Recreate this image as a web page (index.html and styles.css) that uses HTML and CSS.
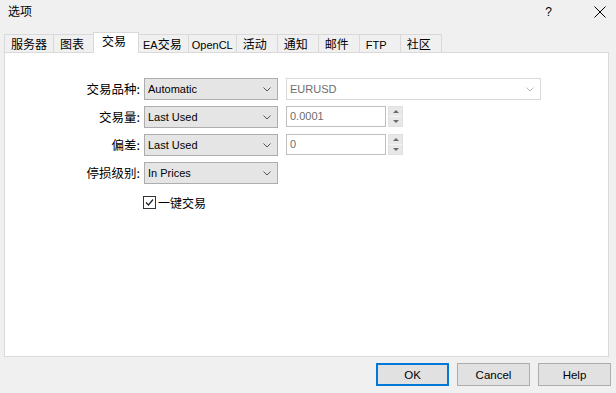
FILE: index.html
```html
<!DOCTYPE html>
<html lang="zh-CN">
<head>
    <meta charset="UTF-8">
    <title>选项</title>
    <link rel="stylesheet" href="styles.css">
</head>
<body>
    <div class="dialog">
        <div class="titlebar">
            <span class="title">选项</span>
            <span class="help">?</span>
            <svg class="close-icon" width="12" height="12" viewBox="0 0 12 12">
                <path d="M0.5 0.5 L11.5 11.5 M11.5 0.5 L0.5 11.5" stroke="#000" stroke-width="1" fill="none"/>
            </svg>
        </div>

        <div class="tabs">
            <div class="tab">服务器</div>
            <div class="tab">图表</div>
            <div class="tab active">交易</div>
            <div class="tab"><span class="lat">EA</span>交易</div>
            <div class="tab tight"><span class="lat">OpenCL</span></div>
            <div class="tab">活动</div>
            <div class="tab">通知</div>
            <div class="tab">邮件</div>
            <div class="tab"><span class="lat">FTP</span></div>
            <div class="tab">社区</div>
        </div>

        <div class="panel">
            <div class="form">
                <label class="lbl">交易品种:</label>
                <div class="combo">
                    <span>Automatic</span>
                    <svg class="chev" width="8" height="5" viewBox="0 0 8 5"><path d="M0.5 0.5 L4 4 L7.5 0.5" stroke="#555" fill="none"/></svg>
                </div>
                <div class="combo disabled">
                    <span>EURUSD</span>
                    <svg class="chev" width="8" height="5" viewBox="0 0 8 5"><path d="M0.5 0.5 L4 4 L7.5 0.5" stroke="#bcbcbc" fill="none"/></svg>
                </div>

                <label class="lbl">交易量:</label>
                <div class="combo">
                    <span>Last Used</span>
                    <svg class="chev" width="8" height="5" viewBox="0 0 8 5"><path d="M0.5 0.5 L4 4 L7.5 0.5" stroke="#555" fill="none"/></svg>
                </div>
                <div class="spin">
                    <div class="spin-input">0.0001</div>
                    <div class="spin-btns">
                        <span class="up"></span>
                        <span class="down"></span>
                    </div>
                </div>

                <label class="lbl">偏差:</label>
                <div class="combo">
                    <span>Last Used</span>
                    <svg class="chev" width="8" height="5" viewBox="0 0 8 5"><path d="M0.5 0.5 L4 4 L7.5 0.5" stroke="#555" fill="none"/></svg>
                </div>
                <div class="spin">
                    <div class="spin-input">0</div>
                    <div class="spin-btns">
                        <span class="up"></span>
                        <span class="down"></span>
                    </div>
                </div>

                <label class="lbl">停损级别:</label>
                <div class="combo">
                    <span>In Prices</span>
                    <svg class="chev" width="8" height="5" viewBox="0 0 8 5"><path d="M0.5 0.5 L4 4 L7.5 0.5" stroke="#555" fill="none"/></svg>
                </div>
                <div></div>

                <div></div>
                <div class="check">
                    <span class="box">
                        <svg width="11" height="11" viewBox="0 0 11 11"><path d="M2 5.5 L4.5 8 L9 2.5" stroke="#222" stroke-width="1.2" fill="none"/></svg>
                    </span>
                    <span>一键交易</span>
                </div>
            </div>
        </div>

        <div class="footer">
            <button class="btn default">OK</button>
            <button class="btn">Cancel</button>
            <button class="btn">Help</button>
        </div>
    </div>
</body>
</html>
```

FILE: styles.css
```css
body {
    margin: 0;
    background-color: #f0f0f0;
    font-family: "Liberation Sans", "Noto Sans CJK SC", sans-serif;
    font-size: 12px;
    color: #000;
}

.dialog {
    width: 616px;
    height: 393px;
    display: flex;
    flex-direction: column;
}

.titlebar {
    height: 32px;
    display: flex;
    align-items: flex-start;
    padding: 4px 10px 0 8px;
    box-sizing: border-box;
}

.title {
    font-family: "Noto Sans CJK SC", sans-serif;
    line-height: 14px;
    flex: 1;
}

.help {
    line-height: 14px;
    margin-right: 42px;
    margin-top: 1px;
}

.close-icon {
    margin-top: 2px;
}

.tabs {
    display: flex;
    padding-left: 4px;
    height: 20px;
    position: relative;
    z-index: 1;
}

.tab {
    flex: none;
    min-width: 42px;
    height: 18px;
    margin-top: 2px;
    padding: 0 6px;
    box-sizing: border-box;
    border: 1px solid #d9d9d9;
    border-bottom: none;
    margin-left: -1px;
    background-color: #f0f0f0;
    font-family: "Noto Sans CJK SC", sans-serif;
    line-height: 17px;
    white-space: nowrap;
}

.tab.tight {
    padding: 0 3px;
}

.tab .lat {
    font-family: "Liberation Sans", sans-serif;
    font-size: 11px;
}

.tab:first-child {
    margin-left: 0;
}

.tab.active {
    background-color: #fff;
    height: 21px;
    margin-top: 0;
    margin-left: -2px;
    margin-right: -2px;
    padding: 0 8px;
    min-width: 46px;
    line-height: 15px;
    position: relative;
    z-index: 2;
}

.panel {
    margin: 0 7px 0 4px;
    height: 305px;
    background-color: #fff;
    border: 1px solid #d9d9d9;
    box-sizing: border-box;
}

.form {
    display: grid;
    grid-template-columns: 135px 134px 259px;
    grid-auto-rows: 22px;
    column-gap: 4px;
    row-gap: 6px;
    padding-top: 25px;
}

.form > .combo.disabled,
.form > .spin {
    margin-left: 4px;
}

.lbl {
    text-align: right;
    line-height: 22px;
    font-family: "Noto Sans CJK SC", sans-serif;
    font-size: 12.5px;
}

.combo {
    display: flex;
    align-items: center;
    justify-content: space-between;
    padding: 0 6px 0 3px;
    background-color: #e5e5e5;
    border: 1px solid #adadad;
    box-sizing: border-box;
    font-size: 11px;
}

.combo.disabled {
    background-color: #fff;
    border-color: #d9d9d9;
    color: #6d6d6d;
}

.chev {
    display: block;
}

.spin {
    display: flex;
    gap: 2px;
    height: 21px;
}

.spin-input {
    width: 100px;
    border: 1px solid #bfbfbf;
    box-sizing: border-box;
    padding-left: 3px;
    font-size: 11px;
    line-height: 19px;
    color: #6d6d6d;
}

.spin-btns {
    width: 15px;
    display: flex;
    flex-direction: column;
    background-color: #e8e8e8;
    border: 1px solid #e0e0e0;
    box-sizing: border-box;
}

.spin-btns span {
    flex: 1;
    display: flex;
    align-items: center;
    justify-content: center;
}

.spin-btns .up {
    border-bottom: 1px solid #f4f4f4;
}

.spin-btns .up::before {
    content: "";
    border-left: 3px solid transparent;
    border-right: 3px solid transparent;
    border-bottom: 3px solid #6a6a6a;
}

.spin-btns .down::before {
    content: "";
    border-left: 3px solid transparent;
    border-right: 3px solid transparent;
    border-top: 3px solid #6a6a6a;
}

.check {
    display: flex;
    align-items: center;
    gap: 2px;
    margin-left: -1px;
    margin-top: 2px;
    font-family: "Noto Sans CJK SC", sans-serif;
}

.check .box {
    width: 13px;
    height: 13px;
    border: 1px solid #333;
    box-sizing: border-box;
    display: flex;
    align-items: center;
    justify-content: center;
    background-color: #fff;
}

.check .box svg {
    display: block;
}

.footer {
    display: flex;
    justify-content: flex-end;
    gap: 8px;
    padding: 6px 5px 0 0;
}

.btn {
    width: 73px;
    height: 23px;
    border: 1px solid #adadad;
    background-color: #e1e1e1;
    font-family: "Liberation Sans", sans-serif;
    font-size: 11.5px;
    padding: 0;
    color: #000;
}

.btn.default {
    border: 2px solid #0078d7;
}
```
